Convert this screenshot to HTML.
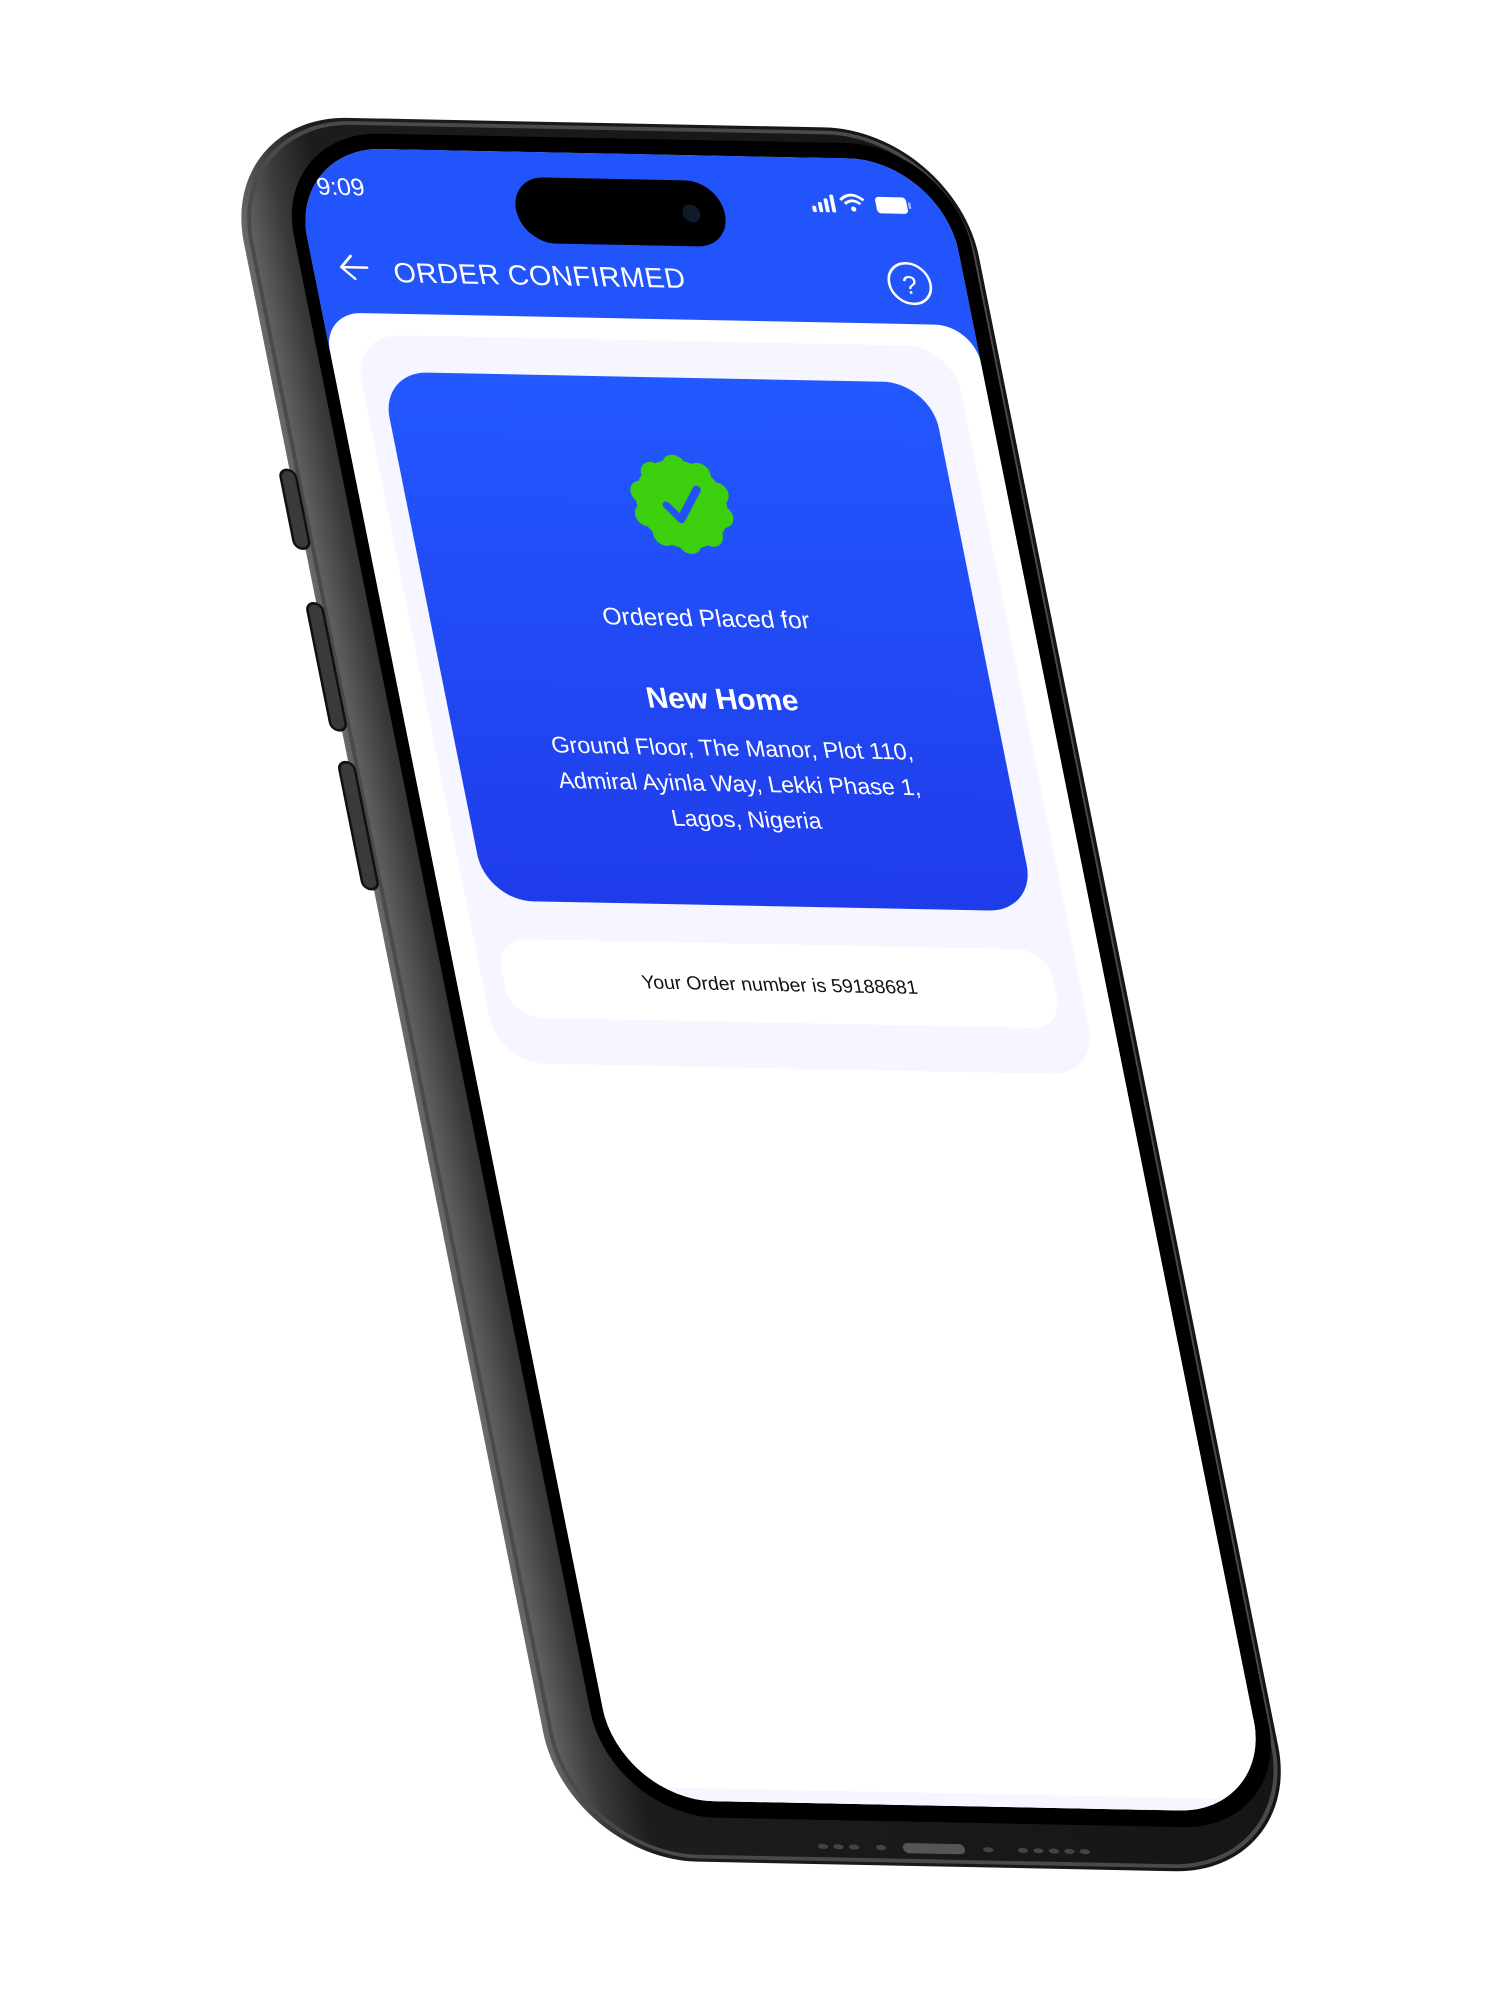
<!DOCTYPE html>
<html><head><meta charset="utf-8"><style>
html,body{margin:0;padding:0;background:#fff;width:1500px;height:2000px;overflow:hidden}
svg{display:block}
text{font-family:"Liberation Sans",sans-serif}
</style></head><body>
<svg width="1500" height="2000" viewBox="0 0 1163 1550" preserveAspectRatio="none" xmlns="http://www.w3.org/2000/svg">
<defs>
<linearGradient id="body" x1="0" y1="0" x2="1" y2="0">
<stop offset="0" stop-color="#6a6a6c"/><stop offset="0.06" stop-color="#3a3a3c"/><stop offset="0.12" stop-color="#1c1c1e"/><stop offset="1" stop-color="#151517"/>
</linearGradient>
<linearGradient id="card" x1="0" y1="0" x2="0" y2="1">
<stop offset="0" stop-color="#2358ff"/><stop offset="1" stop-color="#1f3cea"/>
</linearGradient>
<clipPath id="scr"><rect x="0" y="0" width="505" height="1300" rx="72"/></clipPath>
</defs>
<g transform="matrix(1,0.02,0.198,0.985,224,114)">
  <rect x="-50" y="-24" width="570" height="1372" rx="100" fill="url(#body)"/>
  <rect x="-44" y="-20" width="560" height="1364" rx="96" fill="none" stroke="#4a4a4c" stroke-width="3"/>
  <rect x="-58" y="255" width="12" height="62" rx="6" fill="#3a3a3c" stroke="#111" stroke-width="2"/>
  <rect x="-58" y="360" width="12" height="100" rx="6" fill="#3a3a3c" stroke="#111" stroke-width="2"/>
  <rect x="-58" y="485" width="12" height="100" rx="6" fill="#3a3a3c" stroke="#111" stroke-width="2"/>
  <rect x="-10" y="-12" width="526" height="1325" rx="82" fill="#000"/>
  <g clip-path="url(#scr)">
    <rect x="0" y="0" width="505" height="1300" fill="#fff"/>
    <rect x="0" y="0" width="505" height="170" fill="#2254fb"/>
    <rect x="0" y="130" width="505" height="1200" rx="30" fill="#fff"/>
    <rect x="0" y="1290" width="505" height="10" fill="#f5f6ff"/>
  </g>
  <text x="34" y="37" font-size="19" fill="#fff" text-anchor="middle">9:09</text>
  <rect x="167" y="20" width="162" height="52" rx="26" fill="#000"/>
  <circle cx="303" cy="46" r="7" fill="#111a2a"/>
  <g fill="#fff">
    <rect x="398" y="38" width="3" height="5" rx="1"/><rect x="403" y="35" width="3" height="8" rx="1"/>
    <rect x="408" y="32" width="3" height="11" rx="1"/><rect x="413" y="29" width="3" height="14" rx="1"/>
  </g>
  <path d="M421 33 Q430 25 439 33 M424 36 Q430 31 436 36" stroke="#fff" stroke-width="2.2" fill="none"/>
  <circle cx="430" cy="40" r="2" fill="#fff"/>
  <rect x="448" y="30" width="24" height="13" rx="3" fill="#fff"/>
  <rect x="473" y="34" width="2" height="5" fill="#9fb2ff"/>
  <path d="M22 94 H42 M22 94 L31 85 M22 94 L31 103" stroke="#fff" stroke-width="2" fill="none" stroke-linecap="round"/>
  <text x="62" y="105" font-size="22" fill="#fff" letter-spacing="0.5">ORDER CONFIRMED</text>
  <circle cx="462" cy="98" r="16" fill="none" stroke="#fff" stroke-width="2"/>
  <text x="462" y="106" font-size="20" fill="#fff" text-anchor="middle">?</text>
  <rect x="20" y="147" width="465" height="573" rx="36" fill="#f5f6ff"/>
  <rect x="36" y="176" width="426" height="416" rx="36" fill="url(#card)"/>
  <g fill="#3ccf0e">
    <circle cx="250" cy="276" r="35"/>
    <circle cx="250" cy="246" r="9"/><circle cx="268" cy="252" r="9"/><circle cx="279" cy="267" r="9"/>
    <circle cx="279" cy="285" r="9"/><circle cx="268" cy="300" r="9"/><circle cx="250" cy="306" r="9"/>
    <circle cx="232" cy="300" r="9"/><circle cx="221" cy="285" r="9"/><circle cx="221" cy="267" r="9"/>
    <circle cx="232" cy="252" r="9"/>
  </g>
  <path d="M238 277 L247 288 L264 264" stroke="#2451f5" stroke-width="6" fill="none" stroke-linecap="round" stroke-linejoin="round"/>
  <text x="251" y="372" font-size="19" fill="#fff" text-anchor="middle">Ordered Placed for</text>
  <text x="251" y="437" font-size="23" font-weight="bold" fill="#fff" text-anchor="middle">New Home</text>
  <text x="251" y="474" font-size="18" fill="#fff" text-anchor="middle">Ground Floor, The Manor, Plot 110,</text>
  <text x="251" y="502" font-size="18" fill="#fff" text-anchor="middle">Admiral Ayinla Way, Lekki Phase 1,</text>
  <text x="251" y="530" font-size="18" fill="#fff" text-anchor="middle">Lagos, Nigeria</text>
  <rect x="37" y="622" width="428" height="62" rx="24" fill="#fff"/>
  <text x="251" y="659" font-size="15" fill="#111" text-anchor="middle">Your Order number is 59188681</text>
  <g fill="#444">
    <ellipse cx="150" cy="1334" rx="4" ry="2"/><ellipse cx="162" cy="1334" rx="4" ry="2"/><ellipse cx="174" cy="1334" rx="4" ry="2"/>
    <ellipse cx="195" cy="1334" rx="4" ry="2"/>
    <rect x="212" y="1330" width="48" height="8" rx="4" fill="#555"/>
    <ellipse cx="278" cy="1334" rx="4" ry="2"/>
    <ellipse cx="305" cy="1334" rx="4" ry="2"/><ellipse cx="317" cy="1334" rx="4" ry="2"/><ellipse cx="329" cy="1334" rx="4" ry="2"/><ellipse cx="341" cy="1334" rx="4" ry="2"/><ellipse cx="353" cy="1334" rx="4" ry="2"/>
  </g>
</g>
</svg>
</body></html>
